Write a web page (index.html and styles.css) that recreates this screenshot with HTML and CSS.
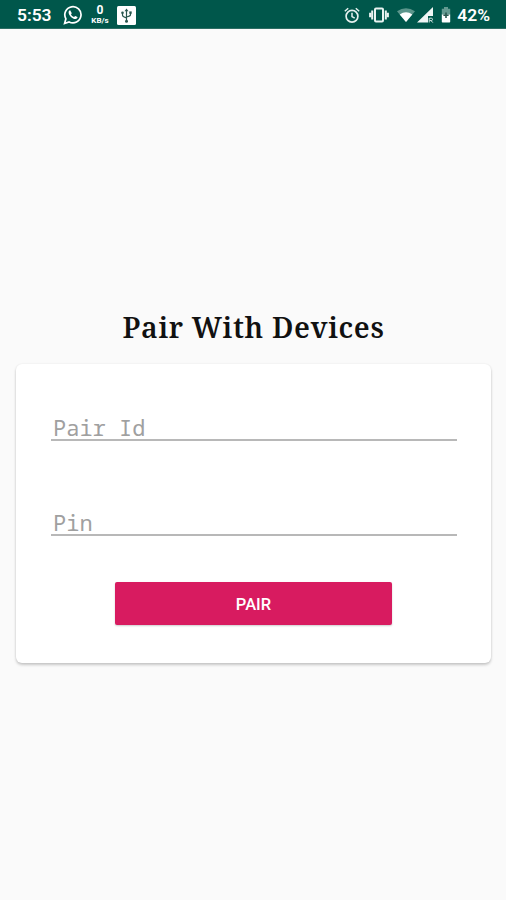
FILE: index.html
```html
<!DOCTYPE html>
<html lang="en">
<head>
  <meta charset="UTF-8">
  <meta name="viewport" content="width=device-width, initial-scale=1.0">
  <title>Pair With Devices</title>
  <link rel="stylesheet" href="styles.css">
</head>
<body>

<header class="status-bar">
  <div class="status-left">
    <span class="time">5:53</span>
    <svg class="icon-chat" width="20" height="20" viewBox="0 0 20 20">
      <path d="M1.6 18.5l1.3-4.7a8.1 8.1 0 1 1 3.2 3.1z" fill="none" stroke="#fff" stroke-width="1.7"/>
      <path d="M7.3 5.4c-.7-.2-1.7.7-1.7 2 0 2.9 4.2 6.9 7 6.7 1.2-.1 2-1 1.9-2l-2.3-1.2-1.2 1.2c-1.4-.5-2.5-1.5-3-2.8l.8-1.1z" fill="#fff"/>
    </svg>
    <div class="net-speed">
      <span class="speed">0</span>
      <span class="unit">KB/s</span>
    </div>
    <svg width="19" height="19" viewBox="0 0 19 19">
      <rect width="19" height="19" rx="1.5" fill="#fff"/>
      <path d="M9.5 4v11M5.5 7v2.3q0 1.4 4 2.6M13.5 6.5v2.3q0 1.4-4 2.2" fill="none" stroke="#29564e" stroke-width="1.2"/>
      <path d="M9.5 2.4l2 2.9h-4z" fill="#29564e"/>
      <circle cx="5.5" cy="6.7" r="1.3" fill="#29564e"/>
      <rect x="12.3" y="5.4" width="2.4" height="2.4" fill="#29564e"/>
      <circle cx="9.5" cy="15.2" r="1.5" fill="#29564e"/>
    </svg>
  </div>
  <div class="status-right">
    <svg class="icon-alarm" width="16" height="17" viewBox="0 0 16 17">
      <circle cx="8" cy="9.3" r="5.9" fill="none" stroke="#e4f0ee" stroke-width="1.7"/>
      <path d="M.8 4.2l3.4-2.9M15.2 4.2l-3.4-2.9M8 5.8v3.8l2.7 1.6" fill="none" stroke="#e4f0ee" stroke-width="1.5"/>
    </svg>
    <svg class="icon-vibrate" width="20" height="16" viewBox="0 0 20 16">
      <rect x="6" y="1.4" width="8" height="13.2" rx="1" fill="none" stroke="#e9f3f1" stroke-width="2"/>
      <path d="M3.2 3.5v9M16.8 3.5v9M1.1 5.7v4.6M18.9 5.7v4.6" stroke="#e9f3f1" stroke-width="2"/>
    </svg>
    <svg class="icon-wifi" width="18" height="14" viewBox="0 0 18 14">
      <path d="M0 3.3Q9-2.8 18 3.3L9 14z" fill="#5b958b"/>
      <path d="M2.7 6.4Q9 2.2 15.3 6.4L9 14z" fill="#fff"/>
    </svg>
    <svg class="icon-signal" width="17" height="16" viewBox="0 0 17 16">
      <path d="M16 0v9h-5v6.5H0z" fill="#f0f6f5"/>
      <path d="M12.2 11v4.5M12.5 11.2h1.8q1.2 0 1.2 1.2t-1.2 1.2h-1.8M14 13.6l1.8 2" fill="none" stroke="#d6e6e3" stroke-width="1"/>
    </svg>
    <svg class="icon-battery" width="10" height="16" viewBox="0 0 10 16">
      <path d="M3 0h4v1.8h2.2v6H.8v-6H3z" fill="#649a91"/>
      <path d="M.8 7.5h8.4v7.3q0 .7-.7.7h-7q-.7 0-.7-.7z" fill="#fff"/>
      <path d="M5 5.5v5.6M2.4 8.3h5.2" stroke="#29564e" stroke-width="1.6"/>
    </svg>
    <span class="battery">42%</span>
  </div>
</header>

<main class="pair">
  <h1>Pair With Devices</h1>
  <form class="card">
    <input type="text" class="field" placeholder="Pair Id" aria-label="Pair Id">
    <input type="text" class="field" placeholder="Pin" aria-label="Pin">
    <button type="button" class="pair-button">PAIR</button>
  </form>
</main>

</body>
</html>
```
FILE: styles.css
```css
* {
  box-sizing: border-box;
}
body {
  margin: 0;
  height: 900px;
  background-color: #fafafa;
  font-family: Roboto, sans-serif;
  overflow: hidden;
}
.status-bar {
  display: flex;
  justify-content: space-between;
  height: 29px;
  padding: 0 16px 0 17px;
  background-color: #00574b;
  border-bottom: 1px solid #2c6e64;
  color: #fff;
}
.status-left,
.status-right {
  display: flex;
  align-items: center;
  height: 30px;
}
.status-bar svg {
  display: block;
  flex: none;
}
.time,
.battery {
  font-size: 17.4px;
  font-weight: 600;
  line-height: 30px;
}
.time {
  width: 46px;
}
.net-speed {
  display: flex;
  flex-direction: column;
  align-items: center;
  width: 20px;
  margin: 0 7px;
  font-weight: bold;
}
.speed {
  font-size: 12px;
  line-height: 12px;
}
.unit {
  font-size: 8px;
  line-height: 10px;
}
.icon-alarm {
  margin-right: 9px;
}
.icon-vibrate {
  margin-right: 8px;
}
.icon-wifi {
  margin-right: 2px;
}
.icon-signal {
  margin-right: 7px;
}
.icon-battery {
  margin-right: 6px;
}
.pair {
  padding: 278px 15px 0 16px;
}
h1 {
  margin: 0;
  height: 57px;
  color: #111;
  font-family: "Noto Serif", "DejaVu Serif", serif;
  font-size: 28.5px;
  font-weight: 600;
  letter-spacing: 0.65px;
  line-height: 40px;
  text-align: center;
  white-space: nowrap;
}
.card {
  display: flex;
  flex-direction: column;
  height: 299px;
  padding: 48px 34px 0 35px;
  background-color: #fff;
  border-radius: 6px;
  box-shadow: 0 2px 3px rgba(0, 0, 0, 0.2), 0 0 2px rgba(0, 0, 0, 0.08);
}
.field {
  width: 100%;
  height: 29px;
  margin-bottom: 66px;
  padding: 3px 2px 0;
  border: none;
  border-bottom: 2px solid #b8b8b8;
  background: none;
  font-family: "Noto Sans Mono", "DejaVu Sans Mono", monospace;
  font-size: 22px;
  line-height: 22px;
  outline: none;
}
.field::placeholder {
  color: #a0a0a0;
  opacity: 1;
}
.pair-button {
  width: 277px;
  height: 43px;
  margin: -20px 0 0 64px;
  padding: 2px 0 0;
  border: none;
  border-radius: 2px;
  background-color: #d81b60;
  box-shadow: 0 1px 2px rgba(0, 0, 0, 0.2);
  color: #fff;
  font-family: Roboto, sans-serif;
  font-size: 16.5px;
  font-weight: 500;
}
```
